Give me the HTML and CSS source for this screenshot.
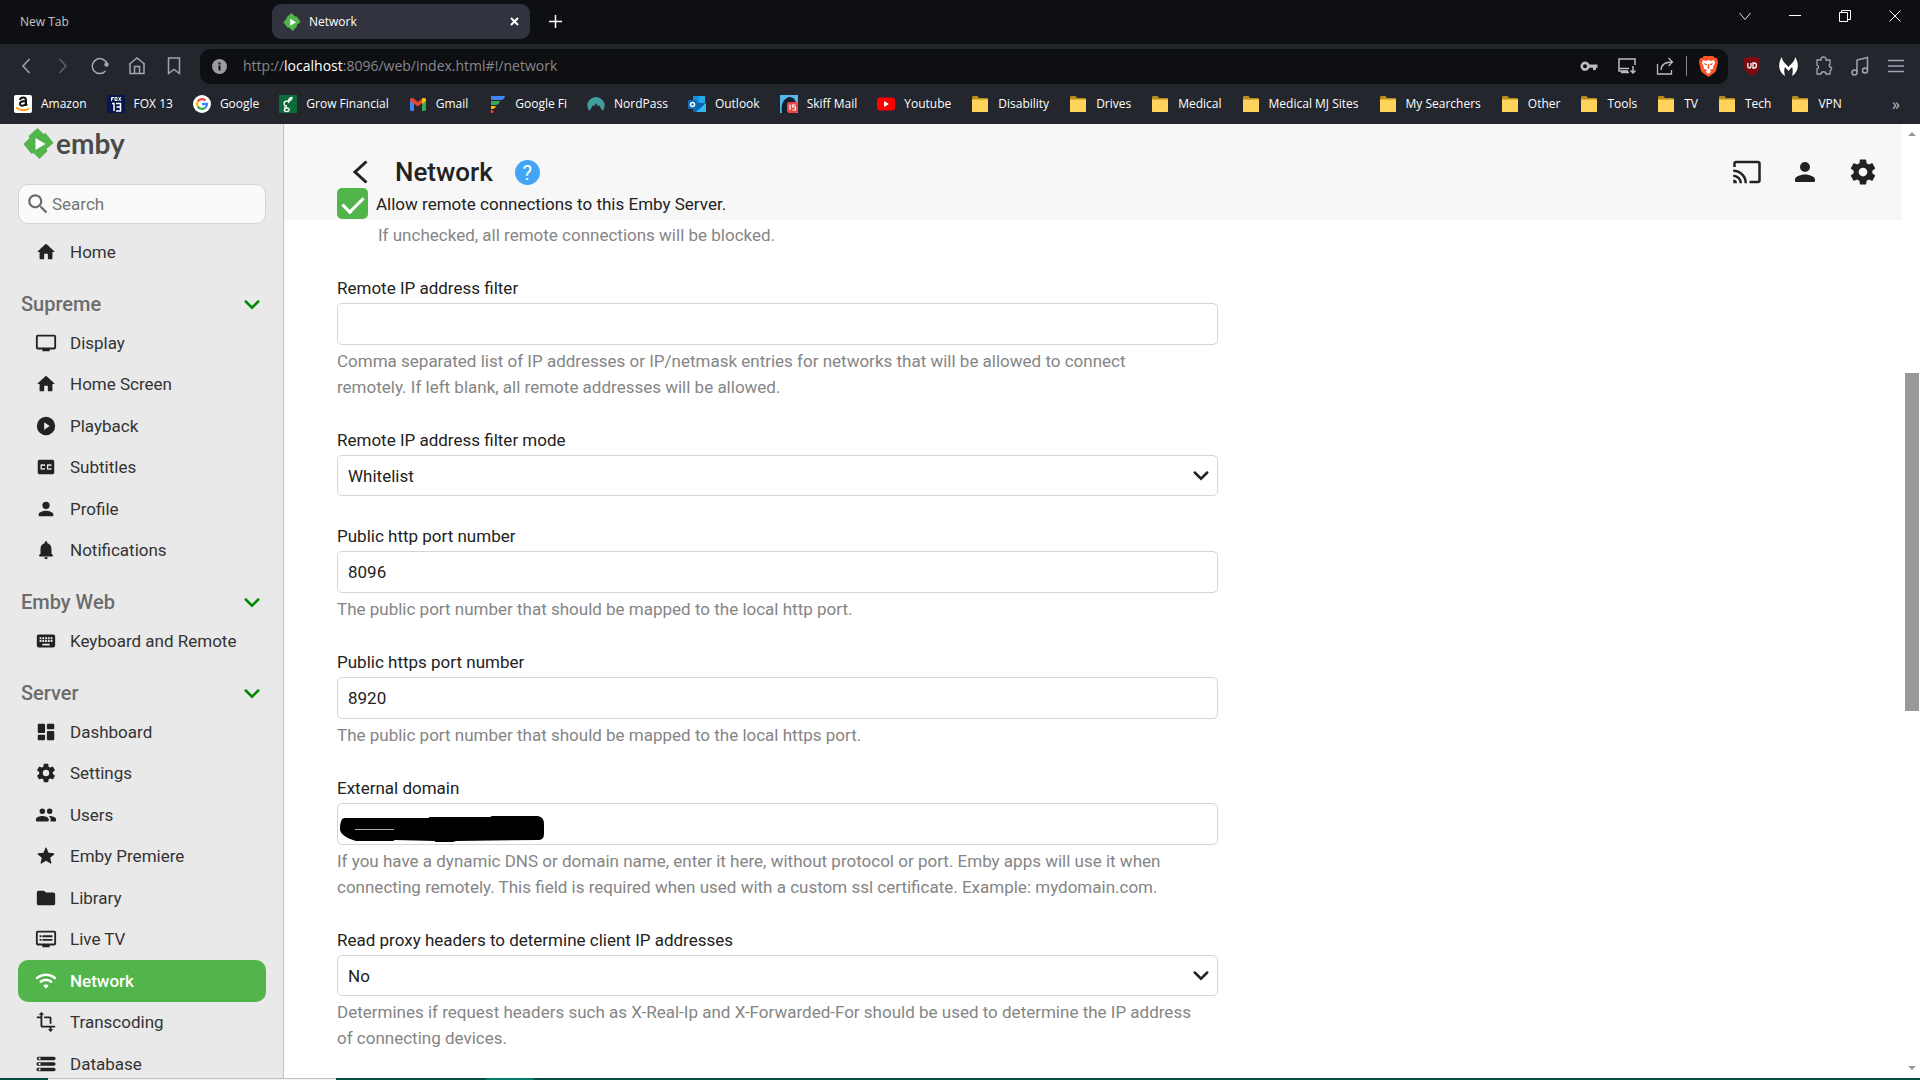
FILE: index.html
```
<!DOCTYPE html>
<html lang="en">
<head>
    <meta charset="UTF-8">
    <meta name="viewport" content="width=device-width, initial-scale=1.0">
    <title>Network</title>
    <link rel="stylesheet" href="styles.css">
</head>
<body>
    <!-- shared icons -->
    <svg class="sprite" width="0" height="0">
        <symbol id="i-home" viewBox="0 0 24 24"><path d="M10 19v-5h4v5c0 .6.4 1 1 1h3c.6 0 1-.4 1-1v-7h1.700c.5 0 .7-.6.300-.900L12.700 3.600c-.4-.3-1-.3-1.400 0L3 11.100c-.3.3-.1.900.300.900H5v7c0 .6.400 1 1 1h3c.6 0 1-.4 1-1z"/></symbol>
        <symbol id="i-display" viewBox="0 0 24 24"><path d="M21 3H3c-1.100 0-2 .9-2 2v12c0 1.100.9 2 2 2h5v2h8v-2h5c1.100 0 2-.9 2-2V5c0-1.100-.9-2-2-2zm0 14H3V5h18z"/></symbol>
        <symbol id="i-play" viewBox="0 0 24 24"><path d="M12 2a10 10 0 1 0 0 20 10 10 0 0 0 0-20zm-2 14V8l6 4z"/></symbol>
        <symbol id="i-cc" viewBox="0 0 24 24"><path d="M19 4H5c-1.100 0-2 .9-2 2v12c0 1.100.9 2 2 2h14c1.100 0 2-.9 2-2V6c0-1.100-.9-2-2-2zm-8 7H9.500v-.5h-2v3h2V13H11v1c0 .5-.5 1-1 1H7c-.5 0-1-.5-1-1v-4c0-.5.500-1 1-1h3c.5 0 1 .5 1 1zm7 0h-1.500v-.5h-2v3h2V13H18v1c0 .5-.5 1-1 1h-3c-.5 0-1-.5-1-1v-4c0-.5.500-1 1-1h3c.5 0 1 .5 1 1z"/></symbol>
        <symbol id="i-person" viewBox="0 0 24 24"><path d="M12 12a4 4 0 1 0 0-8 4 4 0 0 0 0 8zm0 2c-2.700 0-8 1.300-8 4v1c0 .6.400 1 1 1h14c.6 0 1-.4 1-1v-1c0-2.700-5.300-4-8-4z"/></symbol>
        <symbol id="i-bell" viewBox="0 0 24 24"><path d="M12 22c1.100 0 2-.9 2-2h-4c0 1.100.9 2 2 2zm6-6v-5c0-3.100-1.600-5.600-4.500-6.300V4a1.500 1.500 0 0 0-3 0v.7C7.600 5.400 6 7.900 6 11v5l-1.300 1.300c-.6.600-.2 1.700.7 1.700h13.200c.9 0 1.300-1.100.7-1.700z"/></symbol>
        <symbol id="i-keyboard" viewBox="0 0 24 24"><path d="M20 5H4c-1.100 0-2 .9-2 2v10c0 1.100.9 2 2 2h16c1.100 0 2-.9 2-2V7c0-1.100-.9-2-2-2zm-9 3h2v2h-2zm0 3h2v2h-2zM8 8h2v2H8zm0 3h2v2H8zm-1 2H5v-2h2zm0-3H5V8h2zm9 7H8v-2h8zm0-4h-2v-2h2zm0-3h-2V8h2zm3 3h-2v-2h2zm0-3h-2V8h2z"/></symbol>
        <symbol id="i-dashboard" viewBox="0 0 24 24"><path d="M4 13h6c.6 0 1-.4 1-1V4c0-.6-.4-1-1-1H4c-.6 0-1 .4-1 1v8c0 .6.400 1 1 1zm0 8h6c.6 0 1-.4 1-1v-4c0-.6-.4-1-1-1H4c-.6 0-1 .4-1 1v4c0 .6.400 1 1 1zm10 0h6c.6 0 1-.4 1-1v-8c0-.6-.4-1-1-1h-6c-.6 0-1 .4-1 1v8c0 .6.400 1 1 1zM13 4v4c0 .6.400 1 1 1h6c.6 0 1-.4 1-1V4c0-.6-.4-1-1-1h-6c-.6 0-1 .4-1 1z"/></symbol>
        <symbol id="i-gear" viewBox="0 0 24 24"><path d="M19.430 12.980c.04-.32.070-.64.070-.98s-.03-.66-.07-.98l2.110-1.650c.19-.15.240-.42.120-.64l-2-3.460c-.12-.22-.39-.3-.61-.22l-2.490 1c-.52-.4-1.080-.73-1.690-.98l-.38-2.650C14.460 2.180 14.250 2 14 2h-4c-.25 0-.46.180-.49.420l-.38 2.650c-.61.250-1.170.590-1.690.980l-2.490-1c-.23-.09-.49 0-.61.220l-2 3.460c-.13.220-.07.490.120.640l2.110 1.650c-.04.320-.07.650-.07.980s.03.660.070.980l-2.110 1.650c-.19.150-.24.420-.12.640l2 3.460c.12.220.39.300.61.220l2.490-1c.52.400 1.080.730 1.690.980l.38 2.650c.03.240.24.420.49.420h4c.25 0 .46-.18.490-.42l.38-2.650c.61-.25 1.170-.59 1.690-.98l2.490 1c.23.090.49 0 .61-.22l2-3.460c.12-.22.070-.49-.12-.64zM12 15.500a3.500 3.500 0 1 1 0-7 3.500 3.500 0 0 1 0 7z"/></symbol>
        <symbol id="i-users" viewBox="0 0 24 24"><path d="M16 11a3 3 0 1 0 0-6 3 3 0 0 0 0 6zm-8 0a3 3 0 1 0 0-6 3 3 0 0 0 0 6zm0 2c-2.300 0-7 1.200-7 3.500V18c0 .6.400 1 1 1h12c.6 0 1-.4 1-1v-1.500c0-2.300-4.700-3.500-7-3.500zm8 0c-.3 0-.6 0-1 .05 1.200.9 2 2 2 3.450V18c0 .35-.07.700-.18 1H22c.6 0 1-.4 1-1v-1.500c0-2.300-4.700-3.500-7-3.500z"/></symbol>
        <symbol id="i-star" viewBox="0 0 24 24"><path d="M12 17.300l4.900 3c.6.300 1.200-.1 1-.7l-1.300-5.600 4.300-3.700c.5-.5.200-1.200-.4-1.300l-5.700-.5-2.200-5.300c-.2-.6-1-.6-1.200 0L9.200 8.500l-5.700.5c-.6.100-.9.800-.4 1.300L7.400 14l-1.300 5.600c-.1.600.5 1 1 .7z"/></symbol>
        <symbol id="i-folder" viewBox="0 0 24 24"><path d="M10.600 4.600c-.4-.4-.9-.6-1.400-.6H4c-1.100 0-2 .9-2 2v12c0 1.100.9 2 2 2h16c1.100 0 2-.9 2-2V8c0-1.100-.9-2-2-2h-8z"/></symbol>
        <symbol id="i-tv" viewBox="0 0 24 24"><path d="M21 3H3c-1.100 0-2 .9-2 2v12c0 1.100.9 2 2 2h5v2h8v-2h5c1.100 0 2-.9 2-2V5c0-1.100-.9-2-2-2zm0 14H3V5h18zm-2-9H8v2h11zm0 4H8v2h11zM7 8H5v2h2zm0 4H5v2h2z"/></symbol>
        <symbol id="i-wifi" viewBox="0 0 24 24"><path d="M1.300 9.700c.5.500 1.300.6 1.800.1 5.100-4.400 12.600-4.400 17.700 0 .6.500 1.400.4 1.900-.1.600-.6.500-1.500-.1-2-6-5.200-15.100-5.200-21.200 0-.6.500-.7 1.500-.1 2zM9.700 18l1.600 1.600c.4.400 1 .4 1.400 0l1.600-1.600c.5-.5.400-1.300-.2-1.600-1.300-.7-2.900-.7-4.200 0-.6.300-.7 1.100-.2 1.600zm-4.300-4.300c.5.500 1.200.5 1.800.1 2.900-2 6.800-2 9.600 0 .6.400 1.300.4 1.800-.1.600-.6.600-1.600-.1-2.100-3.900-2.800-9.200-2.800-13.100 0-.7.500-.7 1.500 0 2.100z"/></symbol>
        <symbol id="i-crop" viewBox="0 0 24 24"><path d="M22 18v-2H8V4h2L7 1 4 4h2v2H2v2h4v8c0 1.100.9 2 2 2h8v2h-2l3 3 3-3h-2v-2zM10 8h6v6h2V8c0-1.100-.9-2-2-2h-6z"/></symbol>
        <symbol id="i-database" viewBox="0 0 24 24"><path d="M3.500 20h17a1.500 1.500 0 0 0 0-4h-17a1.500 1.500 0 0 0 0 4zM4 17h2v2H4zM2 6c0 1.100.7 2 1.500 2h17a1.500 1.500 0 0 0 0-4h-17C2.700 4 2 4.900 2 6zm4 1H4V5h2zm-2.500 7h17a1.500 1.500 0 0 0 0-4h-17a1.500 1.500 0 0 0 0 4zM4 11h2v2H4z"/></symbol>
        <symbol id="i-chevron" viewBox="0 0 16 16"><path d="M3 6l5 5 5-5" fill="none" stroke="currentColor" stroke-width="2" stroke-linecap="round"/></symbol>
        <symbol id="i-emby" viewBox="0 0 30 31"><path fill="#52b54b" d="M14 0l6 6 2-1 8 10-7 6 1 2-8 8-6-6-2 1-8-10 6-6-1-2z"/><path fill="#fff" d="M12 10l10 6-10 6z"/></symbol>
        <symbol id="i-bmfolder" viewBox="0 0 18 18"><path fill="#b98a1d" d="M1 2.500C1 1.700 1.500 1 2.300 1h4.200l1.600 2H16c.6 0 1 .5 1 1v2H1z"/><path fill="#ffd35c" d="M1 4.500h16V16c0 .6-.4 1-1 1H2c-.6 0-1-.4-1-1z"/></symbol>
    </svg>

    <header class="browser">
        <div class="tab-strip">
            <button class="tab">New Tab</button>
            <div class="tab tab-active">
                <svg width="18" height="18"><use href="#i-emby"/></svg>
                <span class="tab-title">Network</span>
                <button class="icon-btn tab-close" aria-label="Close tab"><svg width="9" height="9" viewBox="0 0 9 9" stroke="#fff" stroke-width="2"><path d="M1 1l7 7M8 1L1 8"/></svg></button>
            </div>
            <button class="icon-btn new-tab" aria-label="New tab"><svg width="13" height="13" viewBox="0 0 13 13" stroke="#fff" stroke-width="1.500"><path d="M6.500 0v13M0 6.500h13"/></svg></button>
            <div class="window-controls">
                <button class="icon-btn" aria-label="Tabs"><svg width="12" height="9" viewBox="0 0 12 9" fill="none" stroke="#ddd"><path d="M.5 1L6 7.500 11.500 1"/></svg></button>
                <button class="icon-btn" aria-label="Minimize"><svg width="12" height="12" viewBox="0 0 12 12" stroke="#fff"><path d="M0 5.500h12"/></svg></button>
                <button class="icon-btn" aria-label="Restore"><svg width="12" height="12" viewBox="0 0 12 12" fill="none" stroke="#fff"><path d="M.5 2.500h8v9h-8zM2.500 2.500v-2h9v9h-3"/></svg></button>
                <button class="icon-btn" aria-label="Close"><svg width="12" height="12" viewBox="0 0 12 12" stroke="#fff"><path d="M.5.5l11 11M11.500.5l-11 11"/></svg></button>
            </div>
        </div>

        <div class="toolbar">
            <div class="toolbar-nav">
                <button class="icon-btn" aria-label="Back"><svg width="18" height="18" viewBox="0 0 18 18" fill="none" stroke="#a0a5b5" stroke-width="1.500"><path d="M12.500 2L6 9l6.500 7"/></svg></button>
                <button class="icon-btn" aria-label="Forward"><svg width="18" height="18" viewBox="0 0 18 18" fill="none" stroke="#5b5f6b" stroke-width="1.500"><path d="M5.500 2L12 9l-6.500 7"/></svg></button>
                <button class="icon-btn" aria-label="Reload"><svg width="18" height="18" viewBox="0 0 18 18" fill="none" stroke="#a0a5b5" stroke-width="1.500"><path d="M14.500 14A7.500 7.500 0 1 1 16 7"/><circle cx="15.500" cy="7.500" r="1.500" fill="#a0a5b5"/></svg></button>
                <button class="icon-btn" aria-label="Home"><svg width="18" height="18" viewBox="0 0 18 18" fill="none" stroke="#a0a5b5" stroke-width="1.500"><path d="M1 7.500L9 1l8 6.500M2 7v9.500h14V7M6.500 16V9.500h5V16"/></svg></button>
                <button class="icon-btn" aria-label="Bookmark"><svg width="18" height="18" viewBox="0 0 18 18" fill="none" stroke="#a0a5b5" stroke-width="1.500"><path d="M3.500 1h11v15.500L9 12.500l-5.500 4z"/></svg></button>
            </div>
            <div class="address-bar">
                <svg width="15" height="15" viewBox="0 0 15 15"><circle cx="7.500" cy="7.500" r="7.500" fill="#9a9ca1"/><path fill="#0e0f13" d="M6.500 3.500h2v2h-2zm0 3h2v5h-2z"/></svg>
                <a class="url" href="#">http://<span class="url-host">localhost</span>:8096/web/index.html#!/network</a>
                <div class="address-actions">
                    <svg width="18" height="18" viewBox="0 0 18 18" fill="#bbbdc2"><path d="M9.500 7.500A4.700 4.700 0 1 0 9.500 10.800H13V13h3v-2.200h1.500V7.500zM5 11.200a2 2 0 1 1 0-4 2 2 0 0 1 0 4z"/></svg>
                    <svg width="18" height="18" viewBox="0 0 18 18" fill="none" stroke="#bbbdc2" stroke-width="1.500"><path d="M17 8V2H1v12h9M1 11.500h10M3 15.500h8M15 9v7M12.500 13.500L15 16l2.500-2.500"/></svg>
                    <svg width="18" height="18" viewBox="0 0 18 18" fill="none" stroke="#bbbdc2" stroke-width="1.300"><path d="M1.500 7v10h14v-4M5 13c.2-5 3.500-8 11.500-8M12.500 1l4 4-4 4"/></svg>
                    <span class="divider"></span>
                    <svg width="19" height="22" viewBox="0 0 19 22"><path fill="#fb542b" d="M5 1h9l2 2h2l1 4-2 9c-1 2-5 4-7.500 6C7 20 3 18 2 16L0 7l1-4h2z"/><path fill="#fff" d="M4 5l3 1 2.500-1L12 6l3-1 1 3-2 4 .5 1.500L11 15l1 2-2.500 2L7 17l1-2-3.500-1.500L5 12 3 8z"/><path fill="#fb542b" d="M5 8l3 1v1H6zm9 0l-3 1v1h2zM9 9h1l.5 4-1 1-1-1z"/></svg>
                </div>
            </div>
            <div class="extensions">
                <button class="icon-btn" aria-label="uBlock"><svg width="18" height="20" viewBox="0 0 18 20"><path fill="#7d0b0f" d="M9 0c2.500 1.500 5 2 8 2v7c0 5-3 8.500-8 11-5-2.500-8-6-8-11V2c3 0 5.500-.5 8-2z"/><path fill="none" stroke="#fff" stroke-width="1.300" d="M4.800 7v3.500q0 1.500 1.600 1.500T8 10.500V7M10 7v5h1q2.500 0 2.500-2.500T11 7z"/></svg></button>
                <button class="icon-btn" aria-label="Malwarebytes"><svg width="19" height="19" viewBox="0 0 19 19" fill="#fff"><path d="M3 0c0 4 3 6 6.500 10C13 6 16 4 16 0c3 4 4 10 1 15-1 2-3 3-4 4 1-4 1-7 0-9L9.500 14 6 10c-1 2-1 5 0 9-1-1-3-2-4-4C-1 10 0 4 3 0z"/></svg></button>
                <button class="icon-btn" aria-label="Extensions"><svg width="18" height="20" viewBox="0 0 18 20" fill="none" stroke="#a0a5b5" stroke-width="1.300"><path d="M2 4h4c-1-4 6-4 5 0h4v4c-1 1-1 2 0 3 2 0 2 2 1 3l-1 1v3h-4c0-3-5-3-5 0H2v-5c2 0 2-4 0-4z"/></svg></button>
                <button class="icon-btn" aria-label="Media"><svg width="18" height="20" viewBox="0 0 18 20" fill="none" stroke="#a0a5b5" stroke-width="1.500"><path d="M6 16V4l10.500-2.500V14"/><circle cx="3.500" cy="16.500" r="2.500"/><circle cx="14" cy="14.500" r="2.500"/></svg></button>
                <button class="icon-btn" aria-label="Menu"><svg width="16" height="14" viewBox="0 0 16 14" stroke="#a0a5b5" stroke-width="1.500"><path d="M0 1.500h16M0 7h16M0 12.500h16"/></svg></button>
            </div>
        </div>

        <nav class="bookmarks">
            <a href="#"><svg width="18" height="18" viewBox="0 0 18 18"><rect width="18" height="18" rx="2" fill="#fff"/><path d="M6 5q.5-2.500 3.200-2.500T12 5v4l1 1.500M12 6C8 6 6 6.500 6 8.700 6 11.500 10 11.500 12 8.500" fill="none" stroke="#111" stroke-width="2"/><path d="M2 12.500q6.500 5 13 1" fill="none" stroke="#f90" stroke-width="1.800"/></svg>Amazon</a>
            <a href="#"><svg width="18" height="18" viewBox="0 0 18 18"><rect width="18" height="18" fill="#06174d"/><path d="M4.500 6V2.500H7M4.500 4H6.500M8 2.500h2V5.500H8zM11.500 2l2.500 4M14 2l-2.500 4" fill="none" stroke="#fff"/><path d="M5 8.500h2V16M9 8.500h4.500V16H9M9.500 12h4" fill="none" stroke="#fff" stroke-width="1.500"/></svg>FOX 13</a>
            <a href="#"><svg width="18" height="18" viewBox="0 0 18 18" fill="none" stroke-width="2.300"><circle cx="9" cy="9" r="9" fill="#fff"/><path stroke="#ea4335" d="M4.800 6.500A5 5 0 0 1 12.500 5.500"/><path stroke="#fbbc05" d="M4.800 6.500a5 5 0 0 0 0 5"/><path stroke="#34a853" d="M4.800 11.500a5 5 0 0 0 7.700 1"/><path stroke="#4285f4" d="M12.500 12.500A5 5 0 0 0 14 9H9"/></svg>Google</a>
            <a href="#"><svg width="18" height="18" viewBox="0 0 18 18"><rect width="18" height="18" fill="#0b6b38"/><path d="M10 8a2.500 2.500 0 1 0-2 3c-3 0-3 2-.5 2 4 0 3.500 3.500 0 3.500-3 0-3-2.500-.5-3M9.500 7Q9.500 3 13 2.500 13 5 10 6" fill="none" stroke="#fff" stroke-width="1.300"/></svg>Grow Financial</a>
            <a href="#"><svg width="18" height="18" viewBox="0 0 18 18"><path fill="#4285f4" d="M1 4l4 3v9H2.500L1 15z"/><path fill="#34a853" d="M13 7l4-3v11l-1.500 1H13z"/><path fill="#ea4335" d="M1 5c0-2 2-2.500 3.500-1.500L9 7l4-3.500V8l-4 3.500L1 6z"/><path fill="#fbbc04" d="M13 3.500C15 2 17 3 17 5v1l-4 3z"/></svg>Gmail</a>
            <a href="#"><svg width="18" height="18" viewBox="0 0 18 18"><path fill="#4285f4" d="M3 1h14q-1 4-4 4H3z"/><path fill="#34a853" d="M3 6h9q-1 4-4 4H3z"/><path fill="#fbbc04" d="M3 11h5q-1 3-3 3H3z"/><circle cx="4" cy="16.500" r="1.500" fill="#ea4335"/></svg>Google Fi</a>
            <a href="#"><svg width="18" height="18" viewBox="0 0 18 18"><path fill="#3f9f9c" d="M2.500 16C-3 9 3 2 9 2s12 7 6.500 14L12 10l-1 1.500L9 8l-2 3.500L6 10z"/></svg>NordPass</a>
            <a href="#"><svg width="18" height="18" viewBox="0 0 18 18"><path fill="#1490df" d="M5 1h12v8H5z"/><path fill="#28a8ea" d="M11 1h6v8h-6z"/><path fill="#0a64ad" d="M5 8h13v9H5z"/><path fill="#35b8f1" d="M18 8v9H8z"/><rect y="5" width="9" height="9" rx="1" fill="#0f6cbd"/><circle cx="4.500" cy="9.500" r="2" fill="none" stroke="#fff" stroke-width="1.500"/></svg>Outlook</a>
            <a href="#"><svg width="18" height="18" viewBox="0 0 18 18"><rect width="18" height="18" fill="#55b7e8"/><path fill="#12202d" d="M2 18Q0 5 9 2q7 0 7 8v8z"/><rect x="7" y="7" width="11" height="11" rx="2" fill="#ee4444"/><path d="M10 9.500V15M15.500 10h-3v2h3v3h-3" fill="none" stroke="#fff" stroke-width="1.200"/></svg>Skiff Mail</a>
            <a href="#"><svg width="18" height="18" viewBox="0 0 18 18"><rect y="2.500" width="18" height="13" rx="3" fill="#f00"/><path fill="#fff" d="M7 6l5 3-5 3z"/></svg>Youtube</a>
            <a href="#"><svg width="18" height="18"><use href="#i-bmfolder"/></svg>Disability</a>
            <a href="#"><svg width="18" height="18"><use href="#i-bmfolder"/></svg>Drives</a>
            <a href="#"><svg width="18" height="18"><use href="#i-bmfolder"/></svg>Medical</a>
            <a href="#"><svg width="18" height="18"><use href="#i-bmfolder"/></svg>Medical MJ Sites</a>
            <a href="#"><svg width="18" height="18"><use href="#i-bmfolder"/></svg>My Searchers</a>
            <a href="#"><svg width="18" height="18"><use href="#i-bmfolder"/></svg>Other</a>
            <a href="#"><svg width="18" height="18"><use href="#i-bmfolder"/></svg>Tools</a>
            <a href="#"><svg width="18" height="18"><use href="#i-bmfolder"/></svg>TV</a>
            <a href="#"><svg width="18" height="18"><use href="#i-bmfolder"/></svg>Tech</a>
            <a href="#"><svg width="18" height="18"><use href="#i-bmfolder"/></svg>VPN</a>
            <button class="icon-btn more">»</button>
        </nav>
    </header>

    <div class="app">
        <aside class="sidebar">
            <a class="logo" href="#"><svg width="31" height="31"><use href="#i-emby"/></svg>emby</a>
            <label class="search">
                <svg width="26" height="26" viewBox="0 0 24 24" fill="#6b6b6b"><path d="M15.500 14h-.8l-.3-.3A6.500 6.500 0 1 0 13.700 14.400l.3.300v.8l5 5 1.500-1.500zm-6 0a4.500 4.500 0 1 1 0-9 4.500 4.500 0 0 1 0 9z"/></svg>
                <input type="text" placeholder="Search">
            </label>
            <ul class="nav-list">
                <li><a href="#"><svg class="nav-icon"><use href="#i-home"/></svg>Home</a></li>
            </ul>
            <button class="nav-header">Supreme<svg class="chevron"><use href="#i-chevron"/></svg></button>
            <ul class="nav-list">
                <li><a href="#"><svg class="nav-icon"><use href="#i-display"/></svg>Display</a></li>
                <li><a href="#"><svg class="nav-icon"><use href="#i-home"/></svg>Home Screen</a></li>
                <li><a href="#"><svg class="nav-icon"><use href="#i-play"/></svg>Playback</a></li>
                <li><a href="#"><svg class="nav-icon"><use href="#i-cc"/></svg>Subtitles</a></li>
                <li><a href="#"><svg class="nav-icon"><use href="#i-person"/></svg>Profile</a></li>
                <li><a href="#"><svg class="nav-icon"><use href="#i-bell"/></svg>Notifications</a></li>
            </ul>
            <button class="nav-header">Emby Web<svg class="chevron"><use href="#i-chevron"/></svg></button>
            <ul class="nav-list">
                <li><a href="#"><svg class="nav-icon"><use href="#i-keyboard"/></svg>Keyboard and Remote</a></li>
            </ul>
            <button class="nav-header">Server<svg class="chevron"><use href="#i-chevron"/></svg></button>
            <ul class="nav-list">
                <li><a href="#"><svg class="nav-icon"><use href="#i-dashboard"/></svg>Dashboard</a></li>
                <li><a href="#"><svg class="nav-icon"><use href="#i-gear"/></svg>Settings</a></li>
                <li><a href="#"><svg class="nav-icon"><use href="#i-users"/></svg>Users</a></li>
                <li><a href="#"><svg class="nav-icon"><use href="#i-star"/></svg>Emby Premiere</a></li>
                <li><a href="#"><svg class="nav-icon"><use href="#i-folder"/></svg>Library</a></li>
                <li><a href="#"><svg class="nav-icon"><use href="#i-tv"/></svg>Live TV</a></li>
                <li><a class="selected" href="#"><svg class="nav-icon"><use href="#i-wifi"/></svg>Network</a></li>
                <li><a href="#"><svg class="nav-icon"><use href="#i-crop"/></svg>Transcoding</a></li>
                <li><a href="#"><svg class="nav-icon"><use href="#i-database"/></svg>Database</a></li>
            </ul>
        </aside>

        <main class="content">
            <div class="page-header">
                <button class="icon-btn back" aria-label="Back"><svg width="18" height="24" viewBox="0 0 18 24" fill="none" stroke="#222" stroke-width="3"><path d="M15.500 1.500L4 12l11.500 10.500"/></svg></button>
                <h1>Network</h1>
                <a class="help" href="#">?</a>
                <div class="header-actions">
                    <button class="icon-btn" aria-label="Cast"><svg width="30" height="30" viewBox="0 0 24 24" fill="#222"><path d="M21 3H3c-1.100 0-2 .9-2 2v3h2V5h18v14h-7v2h7c1.100 0 2-.9 2-2V5c0-1.100-.9-2-2-2zM1 18v3h3a3 3 0 0 0-3-3zm0-4v2a5 5 0 0 1 5 5h2a7 7 0 0 0-7-7zm0-4v2a9 9 0 0 1 9 9h2A11 11 0 0 0 1 10z"/></svg></button>
                    <button class="icon-btn" aria-label="User"><svg width="30" height="30" fill="#222"><use href="#i-person"/></svg></button>
                    <button class="icon-btn" aria-label="Settings"><svg width="30" height="30" fill="#222"><use href="#i-gear"/></svg></button>
                </div>
            </div>

            <form class="settings">
                <div class="check-row">
                    <input type="checkbox" id="remote" checked>
                    <label for="remote">Allow remote connections to this Emby Server.</label>
                </div>
                <p class="hint check-hint">If unchecked, all remote connections will be blocked.</p>

                <div class="field">
                    <label for="filter">Remote IP address filter</label>
                    <input type="text" id="filter">
                    <p class="hint">Comma separated list of IP addresses or IP/netmask entries for networks that will be allowed to connect remotely. If left blank, all remote addresses will be allowed.</p>
                </div>
                <div class="field">
                    <label for="mode">Remote IP address filter mode</label>
                    <div class="select-wrap">
                        <select id="mode"><option>Whitelist</option><option>Blacklist</option></select>
                        <svg class="chevron"><use href="#i-chevron"/></svg>
                    </div>
                </div>
                <div class="field">
                    <label for="http">Public http port number</label>
                    <input type="text" id="http" value="8096">
                    <p class="hint">The public port number that should be mapped to the local http port.</p>
                </div>
                <div class="field">
                    <label for="https">Public https port number</label>
                    <input type="text" id="https" value="8920">
                    <p class="hint">The public port number that should be mapped to the local https port.</p>
                </div>
                <div class="field">
                    <label for="domain">External domain</label>
                    <div class="domain-wrap">
                        <input type="text" id="domain">
                        <svg class="scribble" width="204" height="26" viewBox="0 0 204 26"><path d="M4 2h84l2-1h60l2-1h46q6 1 6 8v10q0 6-6 6l-82 1-3 1h-6q-2 3-8 2-4-1-4-3l-40-1-2 1H16Q0 20 0 13 0 3 4 2z"/><path d="M15 13.500h39" stroke="#aaa"/></svg>
                    </div>
                    <p class="hint">If you have a dynamic DNS or domain name, enter it here, without protocol or port. Emby apps will use it when connecting remotely. This field is required when used with a custom ssl certificate. Example: mydomain.com.</p>
                </div>
                <div class="field">
                    <label for="proxy">Read proxy headers to determine client IP addresses</label>
                    <div class="select-wrap">
                        <select id="proxy"><option>No</option><option>Yes</option></select>
                        <svg class="chevron"><use href="#i-chevron"/></svg>
                    </div>
                    <p class="hint">Determines if request headers such as X-Real-Ip and X-Forwarded-For should be used to determine the IP address of connecting devices.</p>
                </div>
            </form>
        </main>

        <div class="scrollbar">
            <span class="arrow-up"></span>
            <span class="thumb"></span>
            <span class="arrow-down"></span>
        </div>
    </div>

    <footer class="taskbar">
        <span class="task-start"></span>
        <span class="task-search"></span>
        <span class="task-apps"></span>
        <span class="task-active"></span>
    </footer>
</body>
</html>
```
FILE: styles.css
```
* {
    box-sizing: border-box;
}
body {
    margin: 0;
    height: 100vh;
    display: flex;
    flex-direction: column;
    overflow: hidden;
    font-family: Roboto, Arial, sans-serif;
    font-size: 17px;
    color: #222;
    background-color: #fff;
}
a {
    color: inherit;
    text-decoration: none;
}
button, input, select {
    font: inherit;
    color: inherit;
}
svg {
    display: block;
    flex: none;
}
.sprite {
    position: absolute;
}
.icon-btn {
    display: flex;
    align-items: center;
    justify-content: center;
    padding: 0;
    border: 0;
    background: none;
    cursor: pointer;
}

/* browser */
.browser {
    flex: none;
    font-family: "Open Sans", "Noto Sans", sans-serif;
    font-size: 12px;
    color: #fff;
    background-color: #23262d;
}
.tab-strip {
    display: flex;
    height: 44px;
    padding-top: 4px;
    background-color: #0e0f13;
}
.tab {
    width: 272px;
    height: 35px;
    padding: 0 20px;
    border: 0;
    background: none;
    text-align: left;
    color: #c3c4c7;
}
.tab-active {
    display: flex;
    align-items: center;
    gap: 8px;
    width: 258px;
    padding: 0 11px;
    border-radius: 9px;
    background-color: #31343e;
    color: #fff;
}
.tab-title {
    flex: 1;
}
.new-tab {
    width: 50px;
    height: 35px;
}
.window-controls {
    display: flex;
    margin-left: auto;
}
.window-controls .icon-btn {
    width: 50px;
    height: 24px;
}
.toolbar {
    display: flex;
    align-items: center;
    height: 44px;
}
.toolbar-nav {
    display: flex;
    padding: 0 8px 0 7px;
}
.toolbar-nav .icon-btn {
    width: 37px;
    height: 35px;
}
.address-bar {
    flex: 1;
    display: flex;
    align-items: center;
    gap: 16px;
    height: 35px;
    padding: 0 10px 0 12px;
    border-radius: 10px;
    background-color: #0e0f13;
}
.url {
    padding-bottom: 2px;
    font-size: 14px;
    color: #85878c;
}
.url-host {
    color: #fff;
}
.address-actions {
    display: flex;
    align-items: center;
    gap: 20px;
    margin-left: auto;
}
.divider {
    width: 1px;
    height: 20px;
    margin: 0 -8px;
    background-color: #85878c;
}
.extensions {
    display: flex;
    padding: 0 6px;
}
.extensions .icon-btn {
    width: 36px;
    height: 35px;
}
.bookmarks {
    display: flex;
    align-items: center;
    gap: 20px;
    height: 36px;
    padding: 0 20px 5px 14px;
}
.bookmarks a {
    display: flex;
    align-items: center;
    gap: 9px;
    white-space: nowrap;
}
.more {
    margin-left: auto;
    font-size: 16px;
    line-height: 16px;
    color: #c3c4c7;
}

/* app */
.app {
    position: relative;
    flex: 1;
    display: flex;
    min-height: 0;
}
.sidebar {
    flex: none;
    width: 284px;
    padding: 3px 17px 0 18px;
    overflow: hidden;
    border-right: 1px solid #c2c2c2;
    background-color: #e9e9e9;
}
.logo {
    display: flex;
    align-items: center;
    gap: 2px;
    height: 32px;
    padding-left: 5px;
    font-family: Lato, sans-serif;
    font-size: 28px;
    font-weight: 700;
    line-height: 28px;
    color: #4b4b4b;
}
.search {
    display: flex;
    align-items: center;
    height: 40px;
    margin: 25px 0 7px;
    padding-left: 6px;
    border: 1px solid #d2d2d2;
    border-radius: 10px;
    background-color: #fafafa;
}
.search input {
    width: 100%;
    padding: 0 1px;
    border: 0;
    outline: 0;
    background: none;
}
.search input::placeholder {
    color: #757575;
}
.nav-list {
    margin: 0;
    padding: 0;
    list-style: none;
}
.nav-list a {
    display: flex;
    align-items: center;
    gap: 13px;
    height: 42px;
    padding: 0 0 1px 17px;
    border-radius: 10px;
    color: #333;
}
.nav-list li:nth-child(even) a {
    height: 41px;
}
.nav-list .selected {
    font-weight: 500;
    color: #fff;
    background-color: #52b54b;
}
.nav-icon {
    width: 22px;
    height: 22px;
    fill: #222;
}
.selected .nav-icon {
    fill: #fff;
}
.nav-header {
    display: flex;
    align-items: center;
    justify-content: space-between;
    width: 100%;
    height: 49px;
    padding: 12px 4px 0 3px;
    border: 0;
    background: none;
    font-size: 20px;
    font-weight: 500;
    color: #6c6c6c;
}
.chevron {
    width: 20px;
    height: 20px;
}
.nav-header .chevron {
    color: #008a00;
}
.content {
    position: relative;
    flex: 1;
    overflow: hidden;
}
.page-header {
    position: absolute;
    top: 0;
    left: 0;
    right: 0;
    display: flex;
    align-items: center;
    height: 96px;
    padding: 0 24px 0 67px;
    background-color: #f7f7f7;
}
.back {
    margin-right: 26px;
}
.page-header h1 {
    margin: 0 22px 0 0;
    font-size: 26px;
    font-weight: 500;
}
.help {
    width: 25px;
    height: 25px;
    border-radius: 50%;
    background-color: #42a5f5;
    color: #fff;
    font-size: 20px;
    line-height: 26px;
    text-align: center;
}
.header-actions {
    display: flex;
    gap: 28px;
    margin-left: auto;
}
.settings {
    position: relative;
    max-width: 934px;
    padding: 64px 0 0 53px;
}
.check-row {
    display: flex;
    align-items: center;
    gap: 8px;
}
.check-row input {
    appearance: none;
    width: 31px;
    height: 31px;
    margin: 0;
    border-radius: 5px;
    background-color: #52b54b;
}
/* tick mark */
.check-row input:checked::after {
    content: "";
    display: block;
    width: 9px;
    height: 18px;
    margin: 4px 0 0 10px;
    border: solid #fff;
    border-width: 0 3px 3px 0;
    transform: rotate(45deg);
}
.hint {
    margin: 3px 0 0;
    padding-right: 23px;
    line-height: 26px;
    color: #858585;
}
.check-hint {
    padding-left: 41px;
}
.field {
    margin-top: 27px;
}
.field label {
    display: block;
    margin-bottom: 2px;
    line-height: 26px;
}
.field input, .field select {
    display: block;
    width: 100%;
    height: 42px;
    padding: 0 10px;
    border: 1px solid #d6d6d6;
    border-radius: 5px;
    background-color: #fff;
}
.field select {
    appearance: none;
    height: 41px;
}
.select-wrap, .domain-wrap {
    position: relative;
}
.select-wrap .chevron {
    position: absolute;
    top: 10px;
    right: 7px;
    pointer-events: none;
}
.scribble {
    position: absolute;
    top: 13px;
    left: 3px;
}
.scrollbar {
    flex: none;
    display: flex;
    flex-direction: column;
    align-items: center;
    width: 18px;
    padding: 8px 0 8px 2px;
}
.arrow-up, .arrow-down {
    border: 4px solid transparent;
}
.arrow-up {
    border-top: 0;
    border-bottom-color: #999;
}
.arrow-down {
    margin-top: auto;
    border-bottom: 0;
    border-top-color: #999;
}
.thumb {
    width: 14px;
    height: 36%;
    margin-top: 237px;
    background-color: #999;
}

/* edge of the taskbar */
.taskbar {
    flex: none;
    display: flex;
    height: 2px;
    background-color: #004d40;
}
.task-start {
    width: 48px;
}
.task-search {
    width: 288px;
    border-top: 1px solid #c2c2c2;
    background-color: #f2f2f2;
}
.task-apps {
    width: 150px;
}
.task-active {
    width: 48px;
    background-color: #00796b;
}
```
